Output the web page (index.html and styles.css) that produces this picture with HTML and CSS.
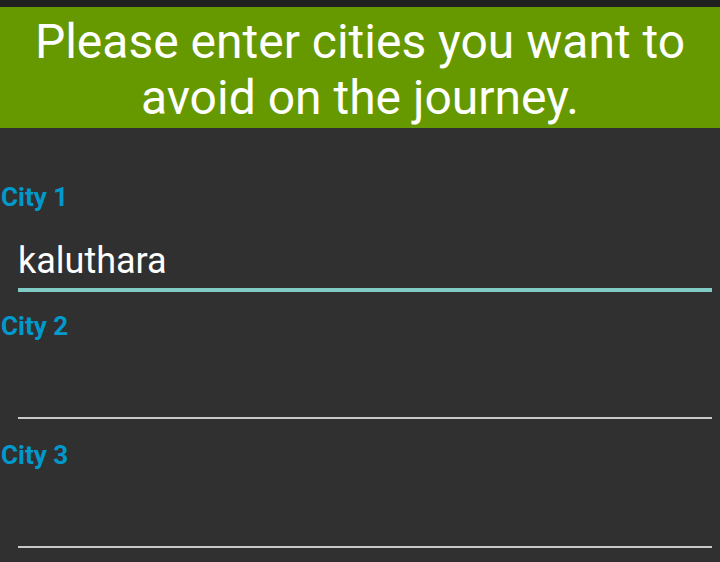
FILE: index.html
```html
<!DOCTYPE html>
<html>
<head>
<meta charset="utf-8">
<link rel="stylesheet" href="styles.css">
</head>
<body>
<div class="statusbar"></div>
<header class="banner">Please enter cities you want to avoid on the journey.</header>
<main class="form">
  <div class="field">
    <div class="label">City 1</div>
    <div class="input focused">kaluthara</div>
  </div>
  <div class="field">
    <div class="label">City 2</div>
    <div class="input"></div>
  </div>
  <div class="field">
    <div class="label">City 3</div>
    <div class="input"></div>
  </div>
</main>
</body>
</html>
```

FILE: styles.css
```css
html, body {
  margin: 0;
  padding: 0;
}
body {
  width: 720px;
  height: 562px;
  overflow: hidden;
  background: #303030;
  font-family: Roboto, "Liberation Sans", sans-serif;
}
.statusbar {
  height: 7px;
  background: #202020;
}
.banner {
  box-sizing: border-box;
  height: 121px;
  padding: 7px 20px 2px;
  background: #669900;
  color: #ffffff;
  font-size: 48px;
  line-height: 56px;
  text-align: center;
}
.form {
  padding-top: 54px;
}
.field {
  height: 129px;
}
.label {
  color: #0099cc;
  font-weight: bold;
  font-size: 26px;
  line-height: 30px;
  padding-left: 1px;
}
.input {
  box-sizing: content-box;
  margin: 29px 8px 0 18px;
  height: 40px;
  padding-bottom: 7px;
  border-bottom: 2px solid #c8c8c8;
  color: #ffffff;
  font-size: 36px;
  line-height: 40px;
}
.input.focused {
  border-bottom: 4px solid #80cbc4;
}
```
